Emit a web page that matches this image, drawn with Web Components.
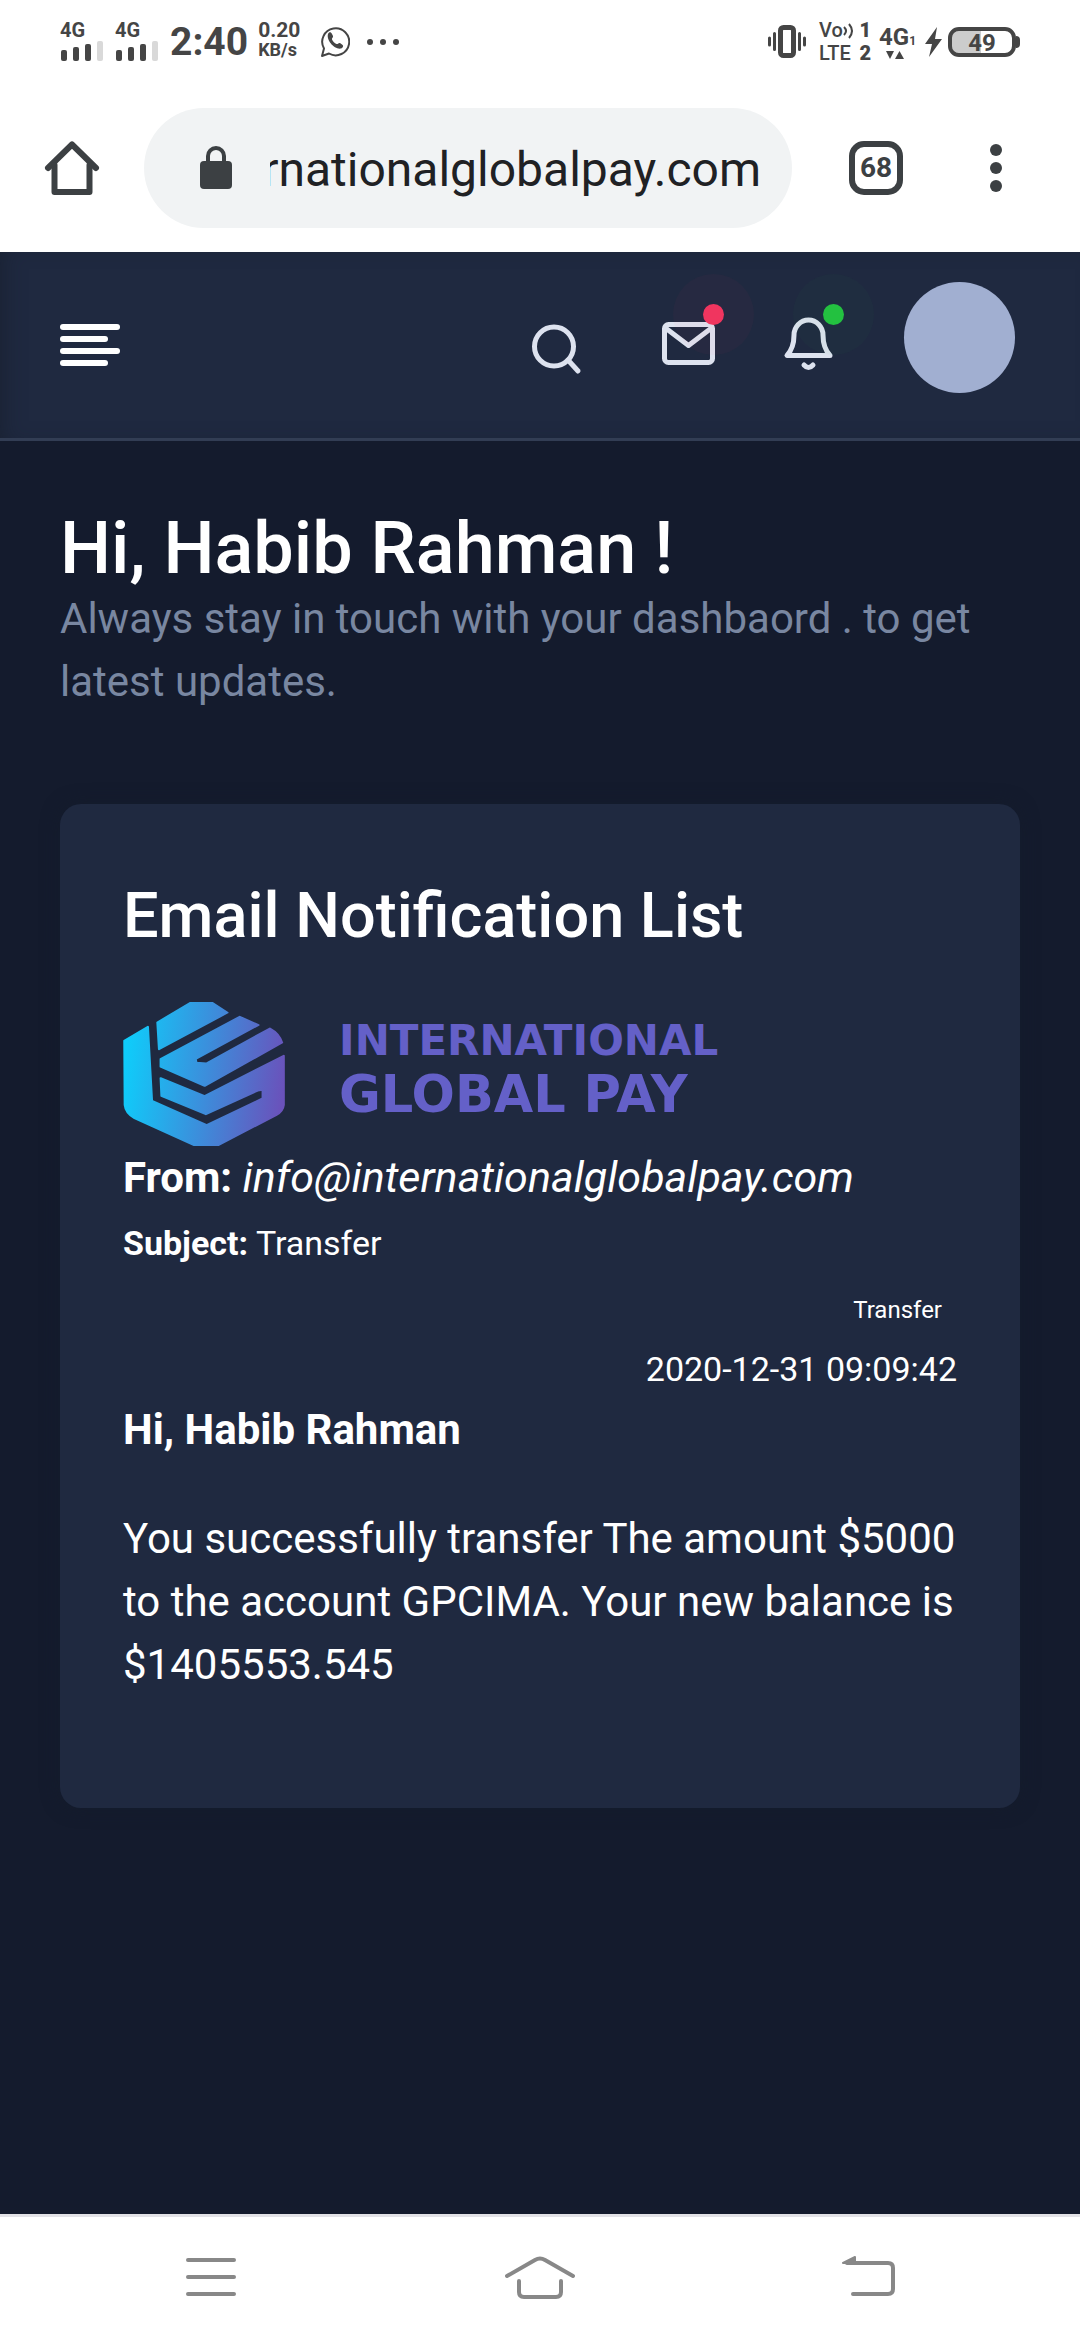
<!DOCTYPE html>
<html lang="en">
<head>
<meta charset="utf-8">
<meta name="viewport" content="width=device-width, initial-scale=1">
<title>Email Notification List</title>
<style>
  body { margin: 0; font-family: Roboto, "Liberation Sans", sans-serif; background: #141b2d; }
</style>
</head>
<body>
<phone-screen>
  <status-bar></status-bar>
  <browser-bar url="internationalglobalpay.com" tabs="68"></browser-bar>
  <dash-header></dash-header>
  <page-greeting>
    <span slot="title">Hi, Habib Rahman !</span>
    Always stay in touch with your dashbaord . to get latest updates.
  </page-greeting>
  <mail-card heading="Email Notification List">
    <pay-logo slot="logo"></pay-logo>
    <mail-line><b>From:</b> <i>info@internationalglobalpay.com</i></mail-line>
    <mail-line size="small"><b>Subject:</b> Transfer</mail-line>
    <mail-line size="tag">Transfer</mail-line>
    <mail-line size="date">2020-12-31 09:09:42</mail-line>
    <mail-line><b>Hi, Habib Rahman</b></mail-line>
    <span slot="body">You successfully transfer The amount $5000 to the account GPCIMA. Your new balance is $1405553.545</span>
  </mail-card>
  <system-nav slot="footer"></system-nav>
</phone-screen>

<script>
const BASE = `
  :host, *, *::before, *::after { box-sizing: border-box; }
  button { border: 0; padding: 0; margin: 0; background: none; font: inherit; color: inherit; flex: none; }
  svg { display: block; flex: none; }
`;
const define = (name, render) => customElements.define(name, class extends HTMLElement {
  constructor() { super(); this.attachShadow({ mode: "open" }); }
  connectedCallback() {
    const t = document.createElement("template");
    t.innerHTML = `<style>${BASE}</style>` + render(this);
    this.shadowRoot.replaceChildren(t.content.cloneNode(true));
  }
});

define("phone-screen", () => `
  <style>
    :host { display: flex; flex-direction: column; min-height: 100vh; }
    .page { flex: 1; }
  </style>
  <div class="page"><slot></slot></div>
  <slot name="footer"></slot>`);

define("signal-meter", () => `
  <style>
    :host { display: block; width: 43px; font-weight: 700; font-size: 20px; line-height: 20px; }
  </style>
  <div>4G</div>
  <svg width="43" height="21" viewBox="0 0 43 21" fill="#454545">
    <rect x="1" y="10" width="6" height="11" rx="2"/><rect x="13" y="7" width="6" height="14" rx="2"/>
    <rect x="25" y="4" width="6" height="17" rx="2"/><rect x="37" y="1" width="6" height="20" rx="2" fill="#d9d9d9"/>
  </svg>`);

define("status-bar", () => `
  <style>
    :host { display: flex; align-items: center; justify-content: space-between; height: 90px; padding: 0 60px 6px; background: #fff; color: #454545; font-weight: 700; }
    .side { display: flex; align-items: center; }
    signal-meter { margin-right: 12px; }
    signal-meter, .rate { padding-bottom: 4px; }
    .time { font-size: 39px; line-height: 44px; margin-right: 10px; }
    .rate { font-size: 21px; line-height: 20px; width: 62px; }
    .rate small { display: block; font-size: 18px; }
    .more { margin-left: 16px; }
    .volte { font-size: 20px; line-height: 23px; width: 52px; margin: 0 8px 0 13px; font-weight: 500; }
    .volte div { display: flex; align-items: center; }
    .volte b { margin-left: auto; font-weight: 900; }
    .net { width: 37px; font-size: 24px; line-height: 24px; margin-right: 9px; }
    .net div { display: flex; align-items: flex-end; }
    .net small { font-size: 12px; line-height: 16px; }
    .net svg { margin: 1px 0 0 7px; }
    .battery { width: 68px; height: 30px; border: 4px solid #454545; border-radius: 11px; margin-left: 6px; font-size: 24px; line-height: 24px; text-align: center;
      background: linear-gradient(90deg, #ccc 29px, #fff 29px) content-box; }
    .nub { width: 4px; height: 12px; border-radius: 0 4px 4px 0; background: #454545; }
  </style>
  <div class="side">
    <signal-meter></signal-meter><signal-meter></signal-meter>
    <div class="time">2:40</div>
    <div class="rate">0.20<small>KB/s</small></div>
    <svg width="30" height="32" viewBox="0 0 30 32" fill="none" stroke="#454545" stroke-width="2">
      <path d="M2 30 4 22.500A13.500 13.500 0 1 1 9 27.500Z" stroke-linejoin="round"/>
      <path d="M8 8c1-2.500 3-2.500 4 0l1 2c.5 1.500-1.500 2-1 3.500 1 2 2.500 3.500 4.500 4.500 1.500.5 2-1.500 3.500-1l2 1.500c2 1 1 3.500-1 4C15 24 6 14.500 8 8Z" fill="#454545" stroke="none"/>
    </svg>
    <svg class="more" width="34" height="6" viewBox="0 0 34 6" fill="#454545"><circle cx="4" cy="3" r="3"/><circle cx="17" cy="3" r="3"/><circle cx="30" cy="3" r="3"/></svg>
  </div>
  <div class="side">
    <svg width="38" height="34" viewBox="0 0 38 34" fill="none" stroke="#454545">
      <rect x="12.500" y="2.500" width="13" height="28" rx="3" stroke-width="5"/>
      <path d="M1.500 13v7M6.500 8.500v16M31.500 8.500v16M36.500 13v7" stroke-width="3" stroke-linecap="round"/>
    </svg>
    <div class="volte">
      <div>Vo<svg width="11" height="16" viewBox="0 0 11 16" fill="none" stroke="#454545" stroke-width="2"><path d="M1 4q4 4 0 8M6 1q6 7 0 14"/></svg><b>1</b></div>
      <div>LTE<b>2</b></div>
    </div>
    <div class="net">
      <div>4G<small>1</small></div>
      <svg width="18" height="10" viewBox="0 0 18 10" fill="#454545"><path d="M0 1h8L4 9ZM9 9h9L13.500 1Z"/></svg>
    </div>
    <svg width="17" height="30" viewBox="0 0 17 30" fill="#454545"><path d="M12 0 0 17h7L4 30 17 12H10Z"/></svg>
    <div class="battery">49</div><div class="nub"></div>
  </div>`);

define("browser-bar", el => `
  <style>
    :host { display: flex; align-items: center; height: 162px; padding: 0 72px 6px 42px; background: #fff; color: #3c4043; }
    .pill { flex: 1; min-width: 0; display: flex; align-items: center; height: 120px; margin: 0 57px 0 42px; padding: 0 31px 0 56px; border-radius: 60px; background: #f1f3f4; }
    input { flex: 1; min-width: 0; height: 74px; margin-left: 38px; padding: 2px 0 0; border: 0; outline: 0; background: none; font: 48px/72px Roboto, sans-serif; color: #202124; direction: rtl; }
    .tabs { width: 54px; height: 54px; border: 6px solid #3c4043; border-radius: 15px; font-size: 28px; line-height: 42px; font-weight: 700; margin-right: 81px; }
    .menu { width: 24px; display: flex; justify-content: center; }
  </style>
  <button aria-label="Home"><svg width="60" height="60" viewBox="0 0 60 60" fill="none" stroke="#3c4043" stroke-width="6" stroke-linecap="round" stroke-linejoin="round"><path d="M6 30 30 6.500 54 30"/><path d="M12.500 27v27h35V27"/></svg></button>
  <div class="pill">
    <svg width="32" height="44" viewBox="0 0 32 44"><rect y="15" width="32" height="28" rx="4" fill="#3c4043"/><path d="M8 16v-6a8 8 0 0 1 16 0v6" fill="none" stroke="#3c4043" stroke-width="4"/></svg>
    <input type="text" aria-label="Address" value="${el.getAttribute("url")}">
  </div>
  <button class="tabs" aria-label="Open tabs">${el.getAttribute("tabs")}</button>
  <button class="menu" aria-label="Menu"><svg width="12" height="48" viewBox="0 0 12 48" fill="#3c4043"><circle cx="6" cy="6" r="6"/><circle cx="6" cy="24" r="6"/><circle cx="6" cy="42" r="6"/></svg></button>`);

define("alert-icon", el => `
  <style>
    :host { display: block; position: relative; }
    i { position: absolute; top: -4px; right: 0; width: 21px; height: 21px; border-radius: 50%; background: ${el.getAttribute("dot")}; }
    i::before { content: ""; position: absolute; inset: -30px; border-radius: 50%; background: inherit; opacity: .03; }
  </style>
  <button aria-label="${el.getAttribute("label")}"><slot></slot></button><i></i>`);

define("dash-header", () => `
  <style>
    :host { display: flex; align-items: center; height: 189px; padding: 0 65px 0 60px; border-bottom: 3px solid #323d54; background: #1f2940;
      box-shadow: inset 12px 0 24px -12px rgba(20, 27, 36, .6); }
    svg { fill: none; stroke: #dde2ef; stroke-width: 5; stroke-linecap: round; stroke-linejoin: round; }
    .toggle { display: flex; flex-direction: column; gap: 6px; width: 60px; margin-right: auto; }
    .toggle span { height: 6px; border-radius: 3px; background: #fff; }
    .toggle span:nth-child(odd) { width: 60px; }
    .toggle span:nth-child(even) { width: 48px; }
    .tools { display: flex; align-items: center; align-self: stretch; padding-top: 2px; }
    .search { margin-right: 60px; }
    .mail { margin-right: 48px; }
    .avatar { align-self: flex-start; width: 111px; height: 111px; margin: 30px 0 0 60px; border-radius: 50%; background: #a1afd1; }
  </style>
  <button class="toggle" aria-label="Toggle sidebar"><span></span><span></span><span></span><span></span></button>
  <div class="tools">
    <button class="search" aria-label="Search"><svg width="72" height="72" viewBox="0 0 72 72"><circle cx="34" cy="36.500" r="19.500"/><path d="m48 50 10 11"/></svg></button>
    <alert-icon class="mail" dot="#f0355f" label="Mail"><svg width="72" height="72" viewBox="0 0 72 72"><rect x="12.500" y="16.500" width="48" height="38" rx="4"/><path d="M13.500 20 36.500 37.500 59.500 20"/></svg></alert-icon>
    <alert-icon dot="#24c241" label="Notifications"><svg width="72" height="72" viewBox="0 0 72 72"><path d="M15 47.500H58C53 42 51 36 51 27A14.500 15 0 0 0 22 27C22 36 20 42 15 47.500Z"/><path d="M32 57q4.500 5 9 0"/></svg></alert-icon>
  </div>
  <button class="avatar" aria-label="Profile"></button>`);

define("page-greeting", () => `
  <style>
    :host { display: block; padding: 70px 60px 0; }
    h2 { margin: 0; font-size: 72px; line-height: 76px; font-weight: 500; color: #fff; }
    p { margin: 0; font-size: 42px; line-height: 63px; color: #7987a1; }
  </style>
  <h2><slot name="title"></slot></h2>
  <p><slot></slot></p>`);

define("mail-card", el => `
  <style>
    :host { display: block; margin: 91px 60px 60px; padding: 74px 63px 66px; border-radius: 21px; background: #1f2940; color: #fff; font-size: 42px; line-height: 63px;
      box-shadow: 0 0 18px rgba(20, 28, 43, .6); }
    h3 { margin: 0 0 48px; font-size: 63px; line-height: 76px; font-weight: 500; }
    p { margin: 46px 0; }
  </style>
  <h3>${el.getAttribute("heading")}</h3>
  <slot name="logo"></slot>
  <slot></slot>
  <p><slot name="body"></slot></p>`);

define("mail-line", () => `
  <style>
    :host { display: block; }
    ::slotted(i) { font-size: 43px; line-height: 1; }
    :host([size=tag]), :host([size=date]) { text-align: right; }
    :host([size=tag]) { padding-right: 15px; }
    span { line-height: 1; }
    :host([size=small]) span, :host([size=date]) span { font-size: 34px; }
    :host([size=tag]) span { font-size: 24px; }
  </style>
  <span><slot></slot></span>`);

define("pay-logo", () => `
  <style>
    :host { display: flex; align-items: center; gap: 54px; height: 144px; color: #6460c8; font-family: "DejaVu Sans", sans-serif; font-weight: 700; }
    .text { padding-bottom: 8px; }
    .a { font-size: 42px; line-height: 49px; }
    .b { font-size: 51px; line-height: 59px; }
  </style>
  <svg width="162" height="144" viewBox="0 0 162 144" role="img" aria-label="Logo mark">
    <defs><linearGradient id="g" gradientUnits="userSpaceOnUse" x1="35" y1="230" x2="428" y2="270">
      <stop offset="0" stop-color="#0fccfa"/><stop offset=".5" stop-color="#3b8fdc"/><stop offset="1" stop-color="#6a52bb"/></linearGradient></defs>
    <g transform="translate(-13 -12) scale(.408 .3333)" fill="url(#g)" stroke="url(#g)" stroke-width="5" stroke-linejoin="round">
      <path d="M116 97 200 36H248L288 68 120 178Z"/>
      <path d="M124 207 318 80 364 105 210 207 212 218 236 220 392 115Q415 130 422 158L232 288 124 230Z"/>
      <path d="M35 152 93 110 103 332 237 405 374 325V300L362 302 235 373 126 318 124 264 232 318 426 197V345Q424 365 408 375L262 468H210L60 385Q38 370 36 345Z"/>
    </g>
  </svg>
  <div class="text"><div class="a">INTERNATIONAL</div><div class="b">GLOBAL PAY</div></div>`);

define("system-nav", () => `
  <style>
    :host { display: flex; justify-content: space-between; align-items: center; height: 126px; padding: 0 175px 4px; border-top: 3px solid #e2e2e6; background: #fff; }
    svg { fill: none; stroke: #888; stroke-width: 4; stroke-linecap: round; stroke-linejoin: round; }
  </style>
  <button aria-label="Recent apps"><svg width="72" height="48" viewBox="0 0 72 48"><path d="M13 7H59M13 24H59M13 41H59"/></svg></button>
  <button aria-label="Home"><svg width="72" height="48" viewBox="0 0 72 48"><path d="M3 23 31 7Q36 4 41 7L69 23M15 28V39Q15 44 20 44H52Q57 44 57 39V28"/></svg></button>
  <button aria-label="Back"><svg width="72" height="48" viewBox="0 0 72 48"><path d="M14 10H55Q60 10 60 15V36Q60 41 55 41H20"/><path d="M10 10 22 4V10Z" fill="#888" stroke-width="2"/></svg></button>`);
</script>
</body>
</html>
